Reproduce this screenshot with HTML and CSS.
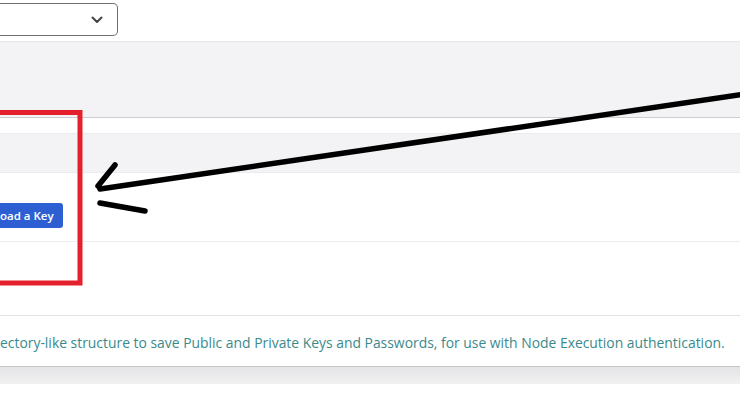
FILE: index.html
```html
<!DOCTYPE html>
<html>
  <head>
    <title>Key Storage</title>
    <link rel="stylesheet" href="styles.css">
  </head>
  <body>
    <div class="page">
      <div class="toolbar">
        <div class="select">
          <svg class="chevron" width="12" height="8" viewBox="0 0 12 8">
            <path d="M1.5 1.5 L6 6 L10.5 1.5" fill="none" stroke="#444" stroke-width="2" stroke-linecap="round" stroke-linejoin="round" />
          </svg>
        </div>
      </div>

      <div class="panel-head"></div>

      <div class="panel">
        <div class="table-head"></div>
        <div class="row row-actions">
          <button class="btn-primary" type="button">oad a Key</button>
        </div>
        <div class="row row-empty"></div>
        <div class="panel-footer">
          <p class="desc">ectory-like structure to save Public and Private Keys and Passwords, for use with Node Execution authentication.</p>
        </div>
      </div>
      <div class="panel-shadow"></div>

      <!-- hand drawn annotation over the screenshot -->
      <svg class="annotation" width="740" height="414" viewBox="0 0 740 414">
        <rect x="-20" y="112.5" width="100" height="170.5" fill="none" stroke="#e3202b" stroke-width="5" />
        <g fill="none" stroke="#000" stroke-width="5.5" stroke-linecap="round">
          <path d="M745 94 Q420 141 100 189" />
          <path d="M115 165 L98 186" />
          <path d="M100 203 L145 211" />
        </g>
      </svg>
    </div>
  </body>
</html>
```

FILE: styles.css
```css
/* Key storage page */
body {
  margin: 0;
  padding: 0;
  font-family: "Open Sans", "Noto Sans", sans-serif;
  background-color: #fff;
  overflow: hidden;
}

.page {
  position: relative;
  width: 740px;
  height: 414px;
  overflow: hidden;
}

.toolbar {
  height: 41px;
  padding-top: 3px;
  box-sizing: border-box;
}

.select {
  width: 118px;
  height: 33px;
  box-sizing: border-box;
  border: 1px solid #6e6e6e;
  border-left: none;
  border-radius: 0 5px 5px 0;
  background-color: #fff;
  display: flex;
  align-items: center;
  justify-content: flex-end;
  padding-right: 14px;
}

.panel-head {
  height: 77px;
  box-sizing: border-box;
  background-color: #f3f3f6;
  border-top: 1px solid #e6e6ea;
  border-bottom: 1px solid #cdcdd2;
}

.panel {
  padding-top: 15px;
}

.table-head {
  height: 40px;
  box-sizing: border-box;
  background-color: #f3f3f6;
  border-top: 1px solid #ececf0;
  border-bottom: 1px solid #ececf0;
}

.row {
  box-sizing: border-box;
  border-bottom: 1px solid #ededef;
}

.row-actions {
  height: 69px;
  padding-top: 30px;
}

.row-empty {
  height: 74px;
  border-bottom-color: #e2e2e4;
}

.btn-primary {
  display: block;
  width: 63px;
  height: 25px;
  padding: 0 0 1px 0;
  border: none;
  border-radius: 0 3px 3px 0;
  background-color: #2d5fd2;
  color: #fff;
  font-family: "Open Sans", "Noto Sans", sans-serif;
  font-size: 11.5px;
  font-weight: 600;
  text-align: left;
  white-space: nowrap;
  cursor: pointer;
}

.panel-footer {
  height: 51px;
  box-sizing: border-box;
  border-bottom: 1px solid #c6c6c8;
  display: flex;
  align-items: center;
}

.desc {
  margin: 0;
  padding-top: 2px;
  white-space: nowrap;
  color: #3a8a8c;
  font-size: 13.9px;
}

.panel-shadow {
  height: 17px;
  background: linear-gradient(#e4e4e6, #f1f1f2);
}

.annotation {
  position: absolute;
  top: 0;
  left: 0;
  pointer-events: none;
}
```
